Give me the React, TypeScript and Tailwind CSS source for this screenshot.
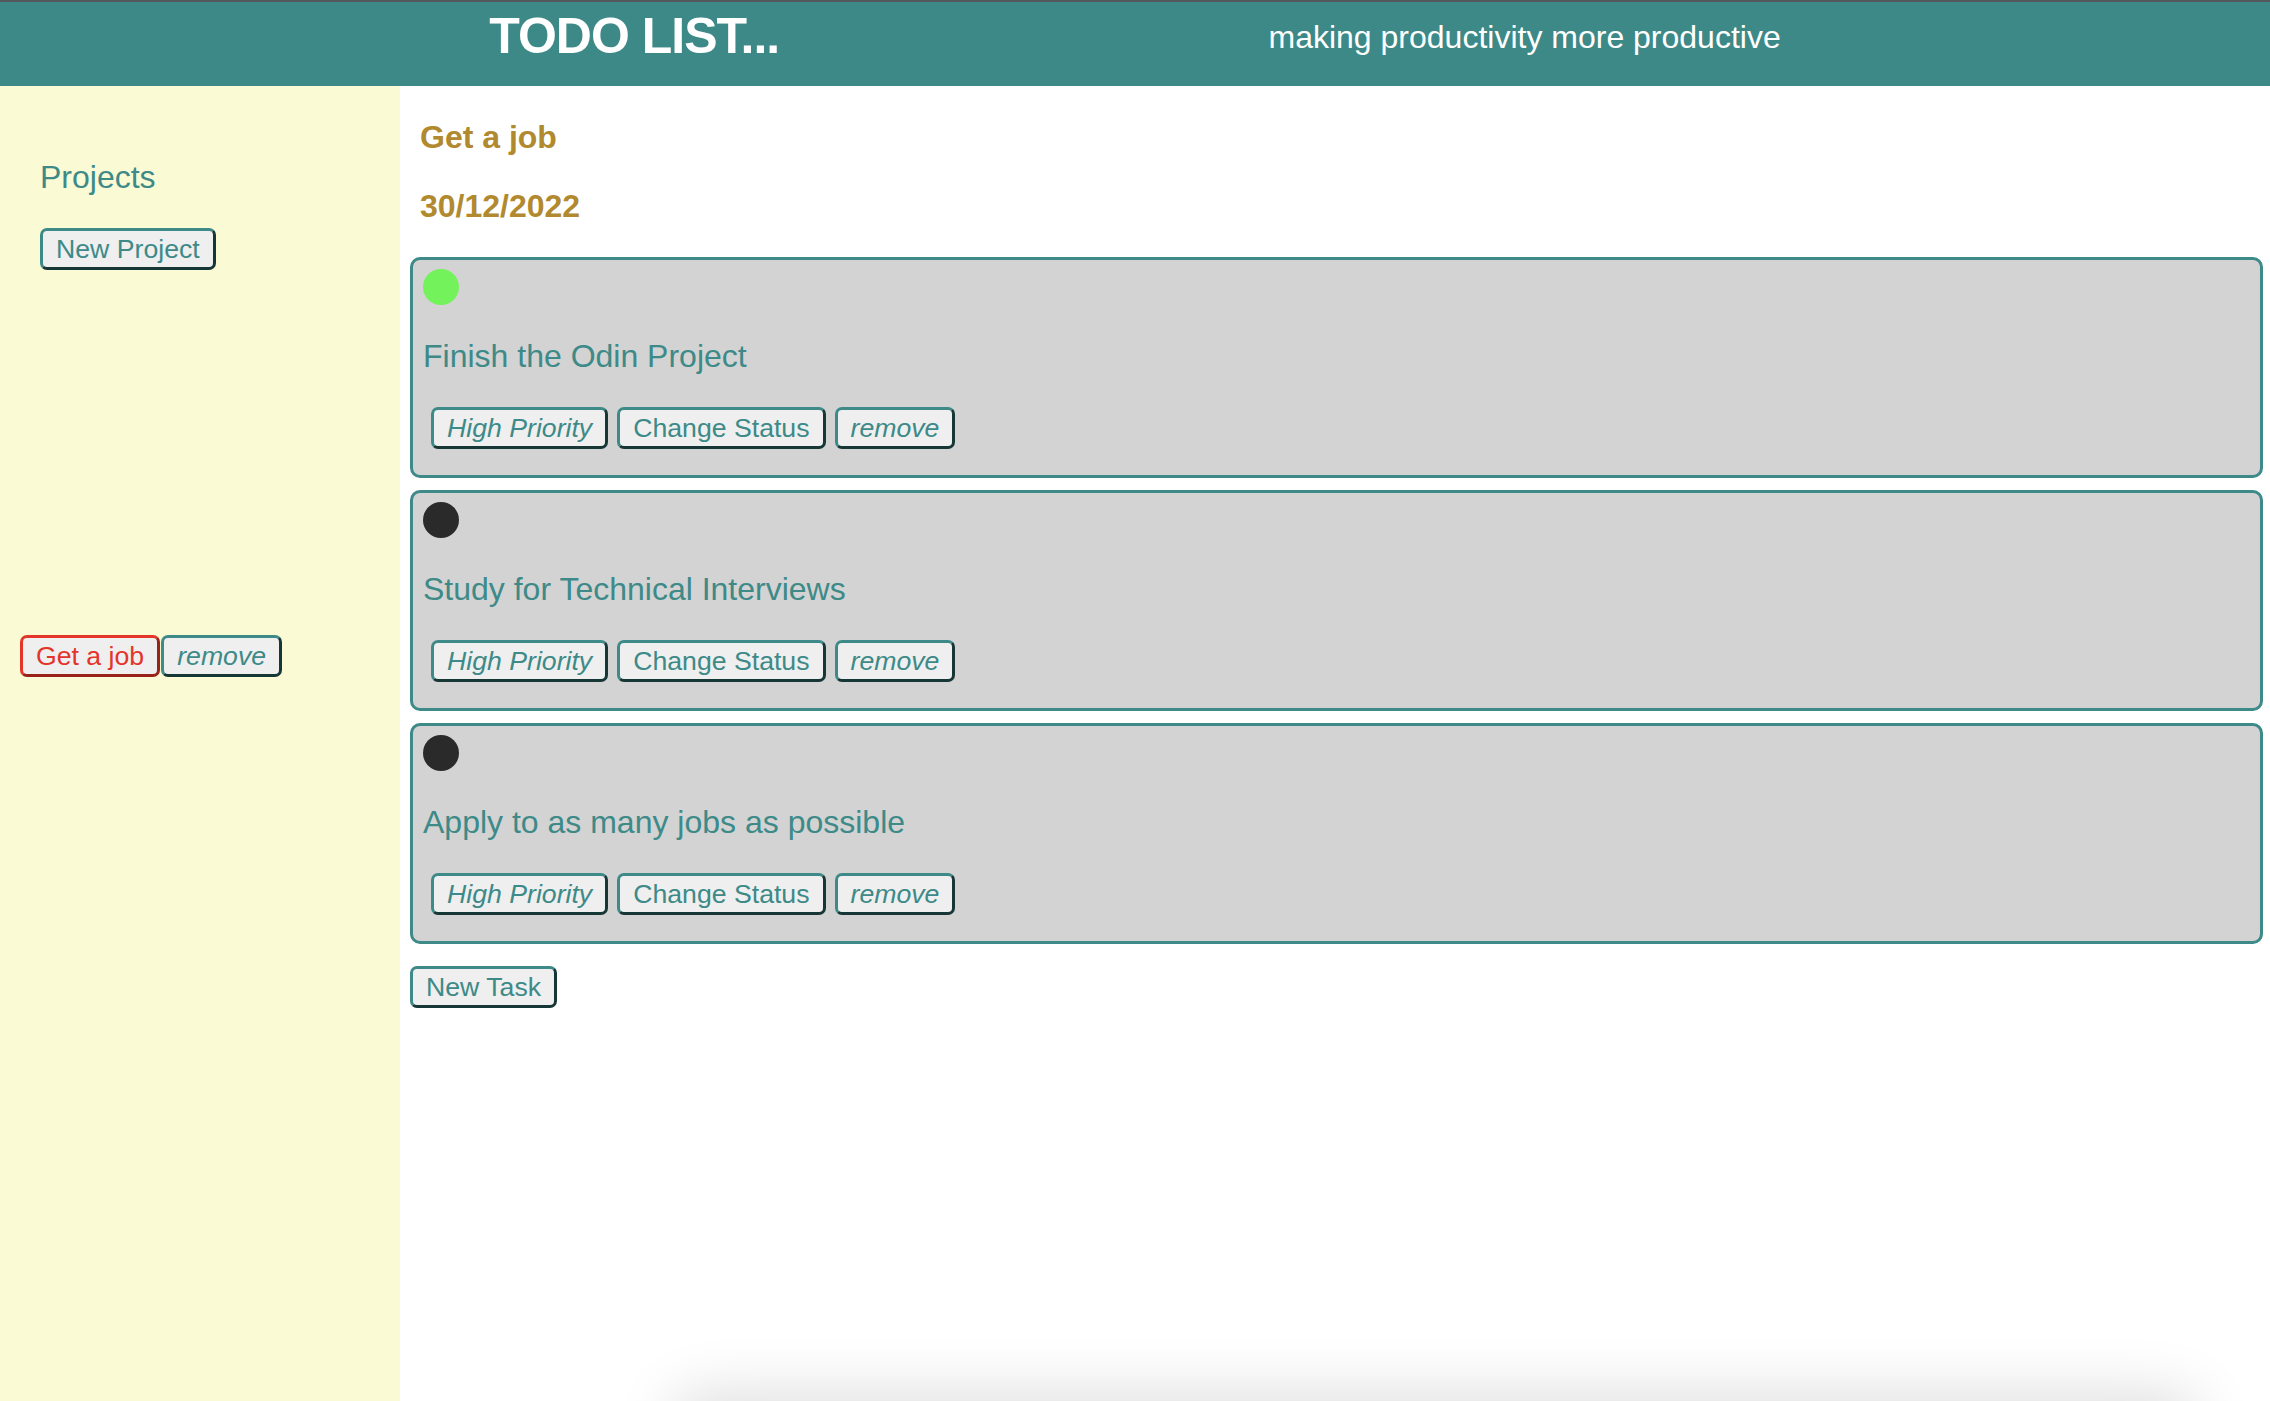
import React from 'react';

type Task = { title: string; done: boolean };

const tasks: Task[] = [
  { title: 'Finish the Odin Project', done: true },
  { title: 'Study for Technical Interviews', done: false },
  { title: 'Apply to as many jobs as possible', done: false },
];

// outset-looking borders: light on top/left, dark on bottom/right
const tealEdges =
  'border-t-[#3d8a88] border-l-[#3d8a88] border-b-[#173636] border-r-[#173636] text-[#3d8a88]';
const redEdges =
  'border-t-[#e3352a] border-l-[#e3352a] border-b-[#99221a] border-r-[#99221a] text-[#e3352a]';

const Button: React.FC<{ label: string; italic?: boolean; red?: boolean }> = ({ label, italic, red }) => (
  <button
    type="button"
    className={`h-[42px] shrink-0 rounded-[7px] border-[3px] bg-[#efefef] px-[13px] text-[26.67px] leading-[30px] ${
      red ? redEdges : tealEdges
    } ${italic ? 'italic' : ''}`}
  >
    {label}
  </button>
);

const TaskCard: React.FC<{ task: Task }> = ({ task }) => (
  <div className="rounded-[10px] border-[3px] border-[#3d8a88] bg-[#d3d3d3] px-[10px] pt-[9px] pb-[26px]">
    <div className={`h-[36px] w-[36px] rounded-full ${task.done ? 'bg-[#74f25b]' : 'bg-[#2a2a2a]'}`} />
    <p className="mt-[33px] text-[32px] leading-[37px] text-[#3d8a88]">{task.title}</p>
    <div className="mt-[32px] flex gap-[9px] pl-[8px]">
      <Button label="High Priority" italic />
      <Button label="Change Status" />
      <Button label="remove" italic />
    </div>
  </div>
);

export default function App() {
  return (
    <div className="relative flex h-[1401px] flex-col overflow-hidden bg-white font-['Liberation_Sans',Arial,Helvetica,sans-serif]">
      <header className="flex h-[86px] shrink-0 items-start justify-evenly border-t-2 border-[#54595b] bg-[#3c8987] text-white">
        <h1 className="mt-[9px] text-[50px] font-bold leading-[50px] tracking-[-1px]">TODO LIST...</h1>
        <p className="mt-[19px] text-[32px] leading-[32px]">making productivity more productive</p>
      </header>

      <div className="flex flex-1">
        <aside className="w-[400px] shrink-0 bg-[#fafad4]">
          <div className="pl-[40px] pt-[73px]">
            <h2 className="text-[32px] leading-[37px] text-[#3d8a88]">Projects</h2>
            <div className="mt-[32px]">
              <Button label="New Project" />
            </div>
          </div>
          <div className="mt-[365px] flex gap-[1px] pl-[20px]">
            <Button label="Get a job" red />
            <Button label="remove" italic />
          </div>
        </aside>

        <main className="flex-1 pl-[10px] pr-[7px]">
          <h2 className="mt-[33px] ml-[10px] text-[32px] font-bold leading-[37px] text-[#b1892f]">Get a job</h2>
          <p className="mt-[32px] ml-[10px] text-[32px] font-bold leading-[37px] text-[#b1892f]">30/12/2022</p>
          <div className="mt-[32px] flex flex-col gap-[12px]">
            {tasks.map(t => (
              <TaskCard key={t.title} task={t} />
            ))}
          </div>
          <div className="mt-[22px]">
            <Button label="New Task" />
          </div>
        </main>
      </div>

      {/* shadow of something sitting just below the window */}
      <div className="pointer-events-none absolute left-[680px] top-[1412px] h-[40px] w-[1510px] rounded-[30px] shadow-[0_-8px_60px_10px_rgba(0,0,0,0.14)]" />
    </div>
  );
}
